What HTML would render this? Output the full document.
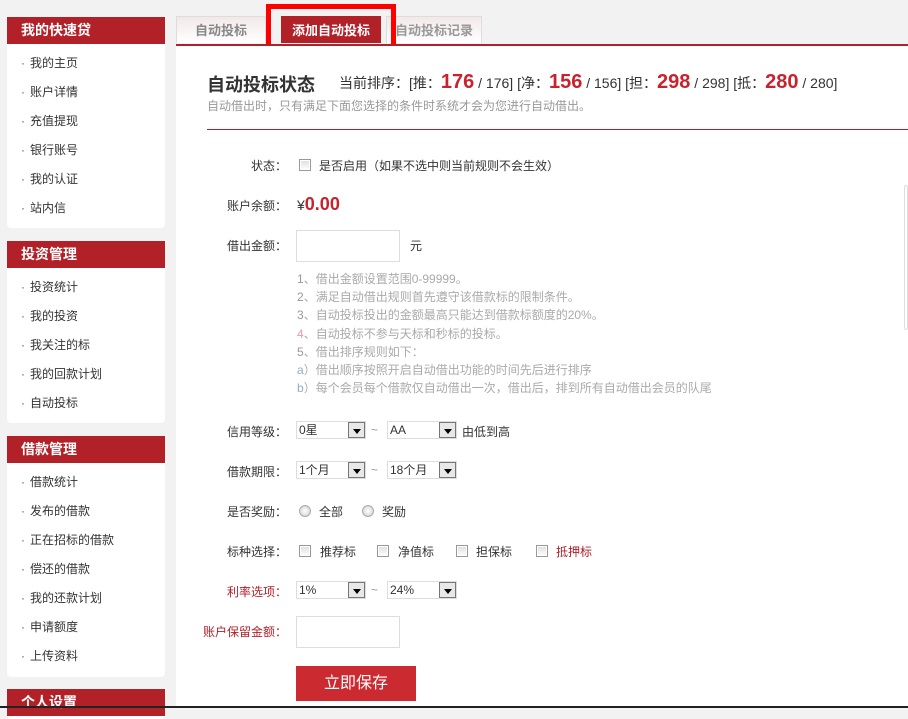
<!DOCTYPE html>
<html><head><meta charset="utf-8"><style>
*{margin:0;padding:0;box-sizing:border-box}
body{width:908px;height:708px;overflow:hidden;background:#f2f2f2;font-family:"Liberation Sans","Noto Sans CJK SC",sans-serif;font-size:12px;color:#333;position:relative}
.abs{position:absolute;white-space:nowrap}
.box{position:absolute;left:7px;width:158px;background:#fff;border-radius:0 0 4px 4px}
.box h3{height:27px;background:#b22028;color:#fff;font-size:14px;font-weight:bold;line-height:27px;padding-left:14px}
.box li{list-style:none;height:29px;line-height:29px;padding-left:14px;font-size:12px;color:#333}
.box li:before{content:"·";margin-right:5px;color:#555}
.main{position:absolute;left:176px;top:44px;width:732px;height:664px;background:#fff;border-top:2px solid #b22028}
.tab{position:absolute;top:16px;height:27px;line-height:27px;text-align:center;font-size:13px;font-weight:bold;color:#999;background:linear-gradient(#f3e8e8,#fff);border:1px solid #ddd;border-bottom:none}
.lbl{position:absolute;width:100px;left:187px;text-align:right;font-size:12px;color:#333}
.chk{position:absolute;display:inline-block;width:12px;height:12px;border:1px solid #999;background:linear-gradient(#ddd,#fff);box-shadow:inset 0 0 0 1px #fff}
.rad{position:absolute;display:inline-block;width:12px;height:12px;border:1px solid #aaa;border-radius:50%;background:radial-gradient(#fff,#ccc)}
.sel{position:absolute;height:18px;border:1px solid #ddd;font-size:12px;line-height:16px;padding-left:2px}
.sel i{position:absolute;right:0;top:0;width:17px;height:16px;border:1px solid #777;background:#e8e8e8}
.sel i:after{content:"";position:absolute;left:4px;top:6px;border:4px solid transparent;border-top:5px solid #000}
.inp{position:absolute;left:296px;width:104px;height:32px;border:1px solid #ddd}
.tip{position:absolute;left:297px;top:270px;color:#aaa;font-size:12px;line-height:18.2px;white-space:nowrap}
.tip span{color:#999}
</style></head><body>
<div class="box" style="top:17px;height:211px"><h3>我的快速贷</h3><ul style="padding-top:5px"><li>我的主页</li><li>账户详情</li><li>充值提现</li><li>银行账号</li><li>我的认证</li><li>站内信</li></ul></div>
<div class="box" style="top:241px;height:182px"><h3>投资管理</h3><ul style="padding-top:5px"><li>投资统计</li><li>我的投资</li><li>我关注的标</li><li>我的回款计划</li><li>自动投标</li></ul></div>
<div class="box" style="top:436px;height:241px"><h3>借款管理</h3><ul style="padding-top:5px"><li>借款统计</li><li>发布的借款</li><li>正在招标的借款</li><li>偿还的借款</li><li>我的还款计划</li><li>申请额度</li><li>上传资料</li></ul></div>
<div class="box" style="top:689px;height:30px"><h3>个人设置</h3></div>

<div class="tab" style="left:176px;width:90px;color:#888">自动投标</div>
<div class="tab" style="left:281px;width:100px;background:#b22028;color:#fff;border-color:#b22028">添加自动投标</div>
<div class="tab" style="left:386px;width:96px">自动投标记录</div>
<div class="abs" style="left:266px;top:4px;width:130px;height:53px;border:5px solid #f00"></div>
<div class="main"></div>
<div class="abs" style="left:207px;top:71px;font-size:18px;font-weight:bold;color:#333">自动投标状态</div>
<div class="abs" style="left:339px;top:70px;font-size:14px;color:#333;line-height:24px">当前排序：[推：<b style="color:#c8232c;font-size:20px">176</b> / 176] [净：<b style="color:#c8232c;font-size:20px">156</b> / 156] [担：<b style="color:#c8232c;font-size:20px">298</b> / 298] [抵：<b style="color:#c8232c;font-size:20px">280</b> / 280]</div>
<div class="abs" style="left:207px;top:97px;color:#999;font-size:12px">自动借出时，只有满足下面您选择的条件时系统才会为您进行自动借出。</div>
<div class="abs" style="left:207px;top:129px;width:701px;height:1px;background:#b22028"></div>
<div class="abs" style="left:904px;top:185px;width:4px;height:145px;border:1px solid #ddd;border-radius:2px"></div>

<div class="lbl" style="top:157px">状态：</div>
<span class="chk" style="left:299px;top:159px"></span>
<div class="abs" style="left:319px;top:157px">是否启用（如果不选中则当前规则不会生效）</div>
<div class="lbl" style="top:197px">账户余额：</div>
<div class="abs" style="left:297px;top:194px;font-size:14px">¥<b style="color:#c8232c;font-size:18px">0.00</b></div>
<div class="lbl" style="top:237px">借出金额：</div>
<div class="inp" style="top:230px"></div>
<div class="abs" style="left:410px;top:237px">元</div>
<div class="tip"><span>1</span>、借出金额设置范围0-99999。<br><span>2</span>、满足自动借出规则首先遵守该借款标的限制条件。<br><span>3</span>、自动投标投出的金额最高只能达到借款标额度的20%。<br><span style="color:#e9a">4</span>、自动投标不参与天标和秒标的投标。<br><span>5</span>、借出排序规则如下：<br><span style="color:#9ac">a</span>）借出顺序按照开启自动借出功能的时间先后进行排序<br><span style="color:#9ac">b</span>）每个会员每个借款仅自动借出一次，借出后，排到所有自动借出会员的队尾</div>

<div class="lbl" style="top:423px">信用等级：</div>
<div class="sel" style="left:296px;top:421px;width:70px">0星<i></i></div>
<div class="abs" style="left:371px;top:423px;color:#999">~</div>
<div class="sel" style="left:387px;top:421px;width:70px">AA<i></i></div>
<div class="abs" style="left:462px;top:423px">由低到高</div>
<div class="lbl" style="top:463px">借款期限：</div>
<div class="sel" style="left:296px;top:461px;width:70px">1个月<i></i></div>
<div class="abs" style="left:371px;top:463px;color:#999">~</div>
<div class="sel" style="left:387px;top:461px;width:70px">18个月<i></i></div>
<div class="lbl" style="top:503px">是否奖励：</div>
<span class="rad" style="left:299px;top:505px"></span><div class="abs" style="left:319px;top:503px">全部</div>
<span class="rad" style="left:362px;top:505px"></span><div class="abs" style="left:382px;top:503px">奖励</div>
<div class="lbl" style="top:543px">标种选择：</div>
<span class="chk" style="left:299px;top:545px"></span><div class="abs" style="left:320px;top:543px">推荐标</div>
<span class="chk" style="left:377px;top:545px"></span><div class="abs" style="left:398px;top:543px">净值标</div>
<span class="chk" style="left:456px;top:545px"></span><div class="abs" style="left:476px;top:543px">担保标</div>
<span class="chk" style="left:536px;top:545px"></span><div class="abs" style="left:556px;top:543px;color:#b22028">抵押标</div>
<div class="lbl" style="top:583px;color:#b22028">利率选项：</div>
<div class="sel" style="left:296px;top:581px;width:70px">1%<i></i></div>
<div class="abs" style="left:371px;top:583px;color:#999">~</div>
<div class="sel" style="left:387px;top:581px;width:70px">24%<i></i></div>
<div class="lbl" style="top:623px;color:#b22028">账户保留金额：</div>
<div class="inp" style="top:616px"></div>
<div class="abs" style="left:296px;top:666px;width:120px;height:35px;background:#cc2a31;color:#fff;font-size:16px;text-align:center;line-height:35px">立即保存</div>
<div class="abs" style="left:0;top:706px;width:908px;height:2px;background:#222"></div>
</body></html>
